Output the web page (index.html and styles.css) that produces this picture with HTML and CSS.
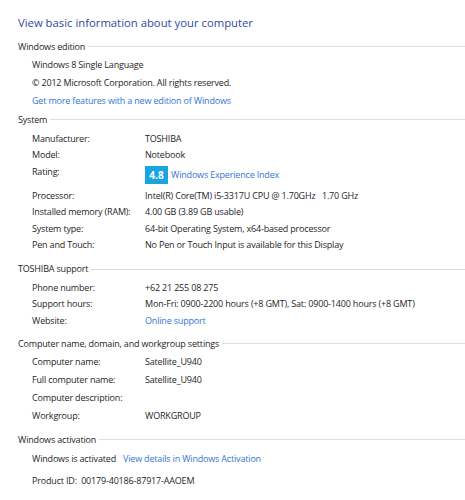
FILE: index.html
```html
<!DOCTYPE html>
<html>
<head>
<meta charset="utf-8">
<link rel="stylesheet" href="styles.css">
</head>
<body>
<div class="page">
  <h1 class="title">View basic information about your computer</h1>

  <section class="sec sec-edition">
    <div class="sec-head"><span>Windows edition</span></div>
    <div class="rows">
      <div class="row"><span class="plain">Windows 8 Single Language</span></div>
      <div class="row"><span class="plain">© 2012 Microsoft Corporation. All rights reserved.</span></div>
      <div class="row"><a class="link">Get more features with a new edition of Windows</a></div>
    </div>
  </section>

  <section class="sec sec-system">
    <div class="sec-head"><span>System</span></div>
    <div class="rows">
      <div class="row"><span class="label">Manufacturer:</span><span class="value">TOSHIBA</span></div>
      <div class="row"><span class="label">Model:</span><span class="value">Notebook</span></div>
      <div class="row row-rating"><span class="label">Rating:</span><span class="value rating"><span class="badge">4.8</span><a class="link">Windows Experience Index</a></span></div>
      <div class="row"><span class="label">Processor:</span><span class="value">Intel(R) Core(TM) i5-3317U CPU @ 1.70GHz&nbsp;&nbsp; 1.70 GHz</span></div>
      <div class="row"><span class="label">Installed memory (RAM):</span><span class="value">4.00 GB (3.89 GB usable)</span></div>
      <div class="row"><span class="label">System type:</span><span class="value">64-bit Operating System, x64-based processor</span></div>
      <div class="row"><span class="label">Pen and Touch:</span><span class="value">No Pen or Touch Input is available for this Display</span></div>
    </div>
  </section>

  <section class="sec sec-support">
    <div class="sec-head"><span>TOSHIBA support</span></div>
    <div class="rows">
      <div class="row"><span class="label">Phone number:</span><span class="value">+62 21 255 08 275</span></div>
      <div class="row"><span class="label">Support hours:</span><span class="value">Mon-Fri: 0900-2200 hours (+8 GMT), Sat: 0900-1400 hours (+8 GMT)</span></div>
      <div class="row"><span class="label">Website:</span><a class="value link">Online support</a></div>
    </div>
  </section>

  <section class="sec sec-computer">
    <div class="sec-head"><span>Computer name, domain, and workgroup settings</span></div>
    <div class="rows">
      <div class="row"><span class="label">Computer name:</span><span class="value">Satellite_U940</span></div>
      <div class="row"><span class="label">Full computer name:</span><span class="value">Satellite_U940</span></div>
      <div class="row"><span class="label">Computer description:</span><span class="value"></span></div>
      <div class="row"><span class="label">Workgroup:</span><span class="value">WORKGROUP</span></div>
    </div>
  </section>

  <section class="sec sec-activation">
    <div class="sec-head"><span>Windows activation</span></div>
    <div class="rows">
      <div class="row row-act"><span class="plain">Windows is activated</span><a class="link act-link">View details in Windows Activation</a></div>
      <div class="row row-pid"><span class="plain">Product ID:&nbsp; 00179-40186-87917-AAOEM</span></div>
    </div>
  </section>
</div>
</body>
</html>
```

FILE: styles.css
```css
html, body {
  margin: 0;
  padding: 0;
  background: #ffffff;
}

.page {
  font-family: "Open Sans", "Noto Sans", sans-serif;
  font-size: 9px;
  letter-spacing: -0.18px;
  color: #262626;
  padding-top: 13px;
  width: 465px;
  overflow: hidden;
}

.title {
  margin: 0 0 0 18px;
  height: 20px;
  line-height: 20px;
  font-size: 11.3px;
  letter-spacing: 0;
  font-weight: normal;
  color: #2b4aa3;
  white-space: nowrap;
}

.sec-head {
  display: flex;
  align-items: center;
  height: 18px;
  line-height: 18px;
  padding-left: 18px;
  white-space: nowrap;
}

.sec-head::after {
  content: "";
  flex: 1;
  height: 1px;
  background: #dedede;
  margin-left: 3px;
}

.rows {
  display: flex;
  flex-direction: column;
  padding-left: 32px;
}

.row {
  display: flex;
  align-items: flex-start;
  white-space: nowrap;
}

.label {
  width: 113px;
  flex: none;
}

.link {
  color: #3576d4;
  text-decoration: none;
}

/* Windows edition */
.sec-edition { margin-top: 4.7px; }
.sec-edition .rows { padding-top: 0.3px; }
.sec-edition .row { height: 18px; line-height: 18px; }

/* System */
.sec-system { margin-top: 1px; }
.sec-system .rows { padding-top: 1.75px; }
.sec-system .row { height: 16.5px; line-height: 16.5px; }
.sec-system .row-rating { height: 24px; }
.rating {
  display: flex;
  align-items: center;
  margin-top: 2px;
  height: 18px;
  line-height: 18px;
}
.badge {
  display: inline-block;
  width: 23px;
  height: 18px;
  line-height: 18px;
  background: #1aa5e1;
  color: #ffffff;
  font-weight: bold;
  font-size: 10px;
  letter-spacing: 0;
  text-align: center;
  margin-right: 3px;
}

/* TOSHIBA support */
.sec-support { margin-top: 6.5px; }
.sec-support .rows { padding-top: 1.5px; }
.sec-support .row { height: 16.4px; line-height: 16.4px; }

/* Computer name */
.sec-computer { margin-top: 6px; }
.sec-computer .row { height: 18px; line-height: 18px; }

/* Activation */
.sec-activation { margin-top: 6px; }
.sec-activation .row-act { height: 20px; line-height: 20px; }
.sec-activation .row-pid { height: 24px; line-height: 24px; }
.act-link { margin-left: 7px; }
```
